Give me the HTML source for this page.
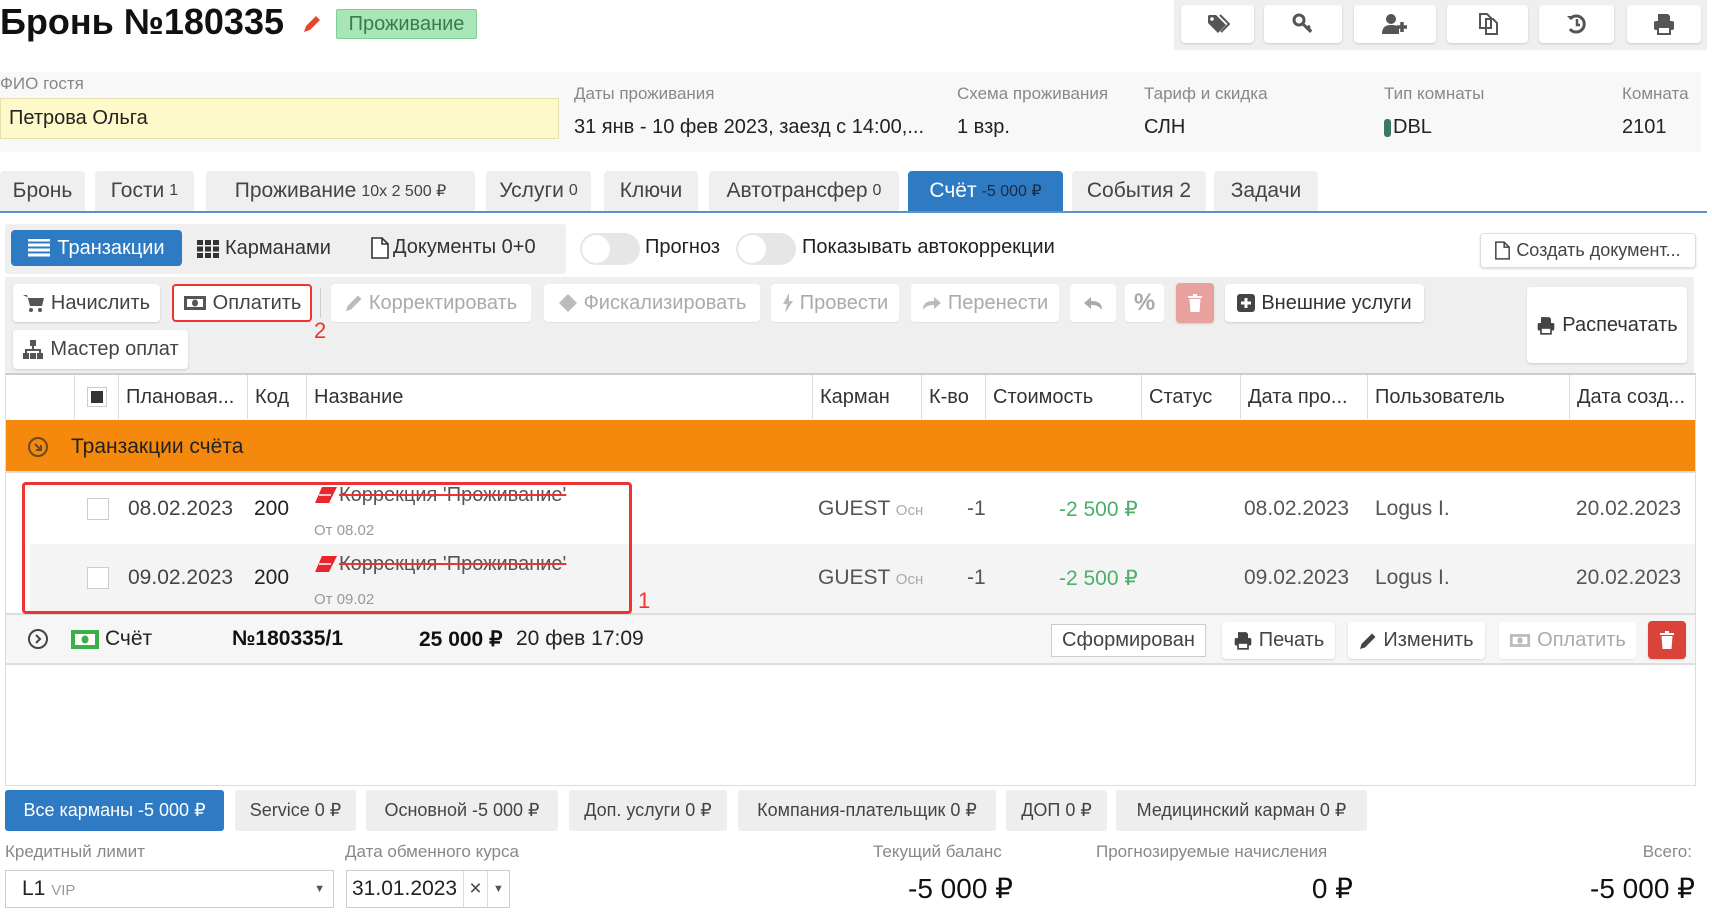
<!DOCTYPE html>
<html><head><meta charset="utf-8"><style>
*{box-sizing:border-box;margin:0;padding:0}
body{width:1712px;height:917px;overflow:hidden;background:#fff;font-family:"Liberation Sans",sans-serif;font-size:20px;color:#333;position:relative}
.a{position:absolute;white-space:nowrap}
.btn{position:absolute;background:#fff;border-radius:4px;box-shadow:0 1px 2px rgba(0,0,0,.15);display:flex;align-items:center;justify-content:center;gap:6px;white-space:nowrap;color:#444}
.dis{color:#aaa}
.tab{position:absolute;top:171px;height:40px;background:#efefef;border-radius:4px 4px 0 0;display:flex;align-items:center;justify-content:center;font-size:21px;color:#444;white-space:nowrap}
.tab small{font-size:16px;margin-left:5px}
.lbl{color:#888;font-size:17px}
.th{position:absolute;top:375px;height:44px;border-left:1px solid #ddd;display:flex;align-items:center;padding-left:7px;font-size:20px;color:#333;white-space:nowrap}
.pk{position:absolute;top:790px;height:41px;background:#eee;border-radius:3px;display:flex;align-items:center;justify-content:center;font-size:18px;color:#444;white-space:nowrap}
svg{display:block}
</style></head><body>
<div class="a" style="left:0;top:1px;font-size:36px;font-weight:bold;color:#111">Бронь №180335</div>
<svg class="a" style="left:300px;top:12px" width="24" height="24" viewBox="0 0 24 24"><path d="M4 20l2-6L16 4l4 4L10 18z" fill="#e8452f"/></svg>
<div class="a" style="left:336px;top:9px;width:141px;height:30px;background:#a8e6b8;border:1px solid #7fcf95;border-radius:2px;color:#3b7a4a;font-size:20px;text-align:center;line-height:28px">Проживание</div>
<div class="a" style="left:1174px;top:0;width:533px;height:50px;background:#efefef"></div>
<div class="btn" style="left:1181px;top:5px;width:73px;height:38px"><svg width="24" height="22" viewBox="0 0 24 22"><path d="M2 3v7l10 10 8-8L10 2H3z" fill="#555"/><circle cx="6" cy="6" r="1.8" fill="#fff"/><path d="M14 2l9 9-8 8" stroke="#555" stroke-width="2" fill="none"/></svg></div>
<div class="btn" style="left:1264px;top:5px;width:78px;height:38px"><svg width="22" height="22" viewBox="0 0 22 22"><circle cx="7" cy="7" r="5" stroke="#555" stroke-width="3" fill="none"/><path d="M10 10l9 9M15 15l3-2M17 18l2-2" stroke="#555" stroke-width="3"/></svg></div>
<div class="btn" style="left:1354px;top:5px;width:82px;height:38px"><svg width="28" height="22" viewBox="0 0 28 22"><circle cx="10" cy="6" r="5" fill="#555"/><path d="M1 21c0-7 4-9 9-9s7 1 8 3v6z" fill="#555"/><path d="M21 9v10M16 14h10" stroke="#555" stroke-width="3.5"/></svg></div>
<div class="btn" style="left:1447px;top:5px;width:81px;height:38px"><svg width="22" height="24" viewBox="0 0 22 24"><path d="M3 2h7l4 4v10H3z M9 7h7l4 4v11H9z" fill="#fff" stroke="#555" stroke-width="2"/></svg></div>
<div class="btn" style="left:1539px;top:5px;width:75px;height:38px"><svg width="22" height="22" viewBox="0 0 22 22"><path d="M4 6a8 8 0 1 1 0 10" stroke="#555" stroke-width="3" fill="none"/><path d="M1 3l4 4 4-4z" fill="#555"/><path d="M11 6v6h3" stroke="#555" stroke-width="2.5" fill="none"/></svg></div>
<div class="btn" style="left:1627px;top:5px;width:74px;height:38px"><svg width="24" height="22" viewBox="0 0 24 22"><path d="M6 1h10l2 2v5H6z" fill="#555"/><rect x="2" y="8" width="20" height="9" rx="2" fill="#555"/><rect x="6" y="14" width="12" height="7" fill="#fff" stroke="#555" stroke-width="2"/></svg></div>
<div class="a" style="left:0;top:72px;width:1701px;height:80px;background:#f8f8f8"></div>
<div class="a lbl" style="left:0;top:74px">ФИО гостя</div>
<div class="a" style="left:0;top:98px;width:559px;height:41px;background:#fdf9c8;border:1px solid #e5e0b0;padding-left:8px;line-height:39px;font-size:20px;color:#222">Петрова Ольга</div>
<div class="a lbl" style="left:574px;top:84px">Даты проживания</div>
<div class="a" style="left:574px;top:116px;font-size:20px;color:#222">31 янв - 10 фев 2023, заезд с 14:00,...</div>
<div class="a lbl" style="left:957px;top:84px">Схема проживания</div>
<div class="a" style="left:957px;top:116px;color:#222">1 взр.</div>
<div class="a lbl" style="left:1144px;top:84px">Тариф и скидка</div>
<div class="a" style="left:1144px;top:116px;color:#222">СЛН</div>
<div class="a lbl" style="left:1384px;top:84px">Тип комнаты</div>
<div class="a" style="left:1384px;top:119px;width:7px;height:18px;background:#3b7a5e;border-radius:3px"></div>
<div class="a" style="left:1393px;top:116px;color:#222">DBL</div>
<div class="a lbl" style="left:1622px;top:84px">Комната</div>
<div class="a" style="left:1622px;top:116px;color:#222">2101</div>
<div class="tab" style="left:0;width:85px">Бронь</div>
<div class="tab" style="left:95px;width:99px">Гости<small>1</small></div>
<div class="tab" style="left:206px;width:269px">Проживание<small>10x 2 500 ₽</small></div>
<div class="tab" style="left:486px;width:105px">Услуги<small>0</small></div>
<div class="tab" style="left:604px;width:94px">Ключи</div>
<div class="tab" style="left:709px;width:190px">Автотрансфер<small>0</small></div>
<div class="tab" style="left:908px;width:155px;background:#2e7bc4;color:#fff">Счёт<small style="color:#1a2a40">-5 000 ₽</small></div>
<div class="tab" style="left:1072px;width:134px">События 2</div>
<div class="tab" style="left:1214px;width:104px">Задачи</div>
<div class="a" style="left:0;top:211px;width:1707px;height:2px;background:#5b8fd0"></div>
<div class="a" style="left:5px;top:224px;width:561px;height:50px;background:#efefef;border-radius:3px"></div>
<div class="a" style="left:11px;top:230px;width:171px;height:36px;background:#2e7bc4;border-radius:4px;color:#fff;font-size:20px;display:flex;align-items:center;justify-content:center;gap:7px"><svg width="22" height="18" viewBox="0 0 22 18"><path d="M0 1h22M0 6h22M0 11h22M0 16h22" stroke="#fff" stroke-width="3"/></svg>Транзакции</div>
<div class="a" style="left:197px;top:237px;display:flex;gap:6px;align-items:center;color:#333"><svg width="22" height="18" viewBox="0 0 22 18"><g fill="#333"><rect x="0" y="0" width="6" height="5"/><rect x="8" y="0" width="6" height="5"/><rect x="16" y="0" width="6" height="5"/><rect x="0" y="6.5" width="6" height="5"/><rect x="8" y="6.5" width="6" height="5"/><rect x="16" y="6.5" width="6" height="5"/><rect x="0" y="13" width="6" height="5"/><rect x="8" y="13" width="6" height="5"/><rect x="16" y="13" width="6" height="5"/></g></svg>Карманами</div>
<div class="a" style="left:371px;top:236px;display:flex;gap:4px;align-items:center;color:#333"><svg width="18" height="22" viewBox="0 0 18 22"><path d="M1 1h10l6 6v14H1z" fill="#fff" stroke="#333" stroke-width="1.6"/><path d="M11 1v6h6" fill="none" stroke="#333" stroke-width="1.6"/></svg>Документы 0+0</div>
<div class="a" style="left:580px;top:233px;width:60px;height:32px;background:#e6e6e6;border-radius:16px"><div style="position:absolute;left:2px;top:2px;width:28px;height:28px;border-radius:50%;background:#fff"></div></div>
<div class="a" style="left:645px;top:236px;color:#222">Прогноз</div>
<div class="a" style="left:736px;top:233px;width:60px;height:32px;background:#e6e6e6;border-radius:16px"><div style="position:absolute;left:2px;top:2px;width:28px;height:28px;border-radius:50%;background:#fff"></div></div>
<div class="a" style="left:802px;top:236px;color:#222">Показывать автокоррекции</div>
<div class="btn" style="left:1480px;top:233px;width:216px;height:35px;border:1px solid #ddd;font-size:18px"><svg width="15" height="19" viewBox="0 0 18 22"><path d="M1 1h10l6 6v14H1z" fill="#fff" stroke="#444" stroke-width="1.8"/><path d="M11 1v6h6" fill="none" stroke="#444" stroke-width="1.8"/></svg>Создать документ...</div>
<div class="a" style="left:5px;top:277px;width:1689px;height:96px;background:#efefef"></div>
<div class="btn" style="left:13px;top:284px;width:147px;height:38px"><svg width="22" height="20" viewBox="0 0 22 20"><path d="M0 2h4l3 11h12l2-8H6z" fill="#555"/><circle cx="8" cy="17" r="2" fill="#555"/><circle cx="17" cy="17" r="2" fill="#555"/></svg>Начислить</div>
<div class="btn" style="left:172px;top:284px;width:140px;height:38px;border:2px solid #e33;box-shadow:none"><svg width="24" height="16" viewBox="0 0 24 16"><rect x="1" y="1" width="22" height="14" fill="#555"/><rect x="4" y="4" width="16" height="8" fill="#fff"/><ellipse cx="12" cy="8" rx="3" ry="3.5" fill="#555"/></svg>Оплатить</div>
<div class="a" style="left:320px;top:288px;width:1px;height:30px;background:#ccc"></div>
<div class="a" style="left:314px;top:318px;color:#e33;font-size:22px">2</div>
<div class="btn dis" style="left:331px;top:284px;width:200px;height:38px;box-shadow:0 1px 1px rgba(0,0,0,.06)"><svg width="18" height="18" viewBox="0 0 18 18"><path d="M1 17l1.5-5L13 1.5 16.5 5 6 15.5z" fill="#bbb"/></svg>Корректировать</div>
<div class="btn dis" style="left:544px;top:284px;width:216px;height:38px;box-shadow:0 1px 1px rgba(0,0,0,.06)"><svg width="20" height="20" viewBox="0 0 20 20"><path d="M10 1l9 9-9 9-9-9z" fill="#bbb"/></svg>Фискализировать</div>
<div class="btn dis" style="left:771px;top:284px;width:128px;height:38px;box-shadow:0 1px 1px rgba(0,0,0,.06)"><svg width="12" height="20" viewBox="0 0 12 20"><path d="M7 0L1 11h4l-2 9 8-12H7z" fill="#bbb"/></svg>Провести</div>
<div class="btn dis" style="left:911px;top:284px;width:148px;height:38px;box-shadow:0 1px 1px rgba(0,0,0,.06)"><svg width="20" height="16" viewBox="0 0 20 16"><path d="M1 15c0-7 4-9 11-9V2l7 6-7 6v-4c-5 0-8 1-11 5z" fill="#bbb"/></svg>Перенести</div>
<div class="btn dis" style="left:1070px;top:284px;width:46px;height:38px;box-shadow:0 1px 1px rgba(0,0,0,.06)"><svg width="20" height="16" viewBox="0 0 20 16"><path d="M19 15c0-7-4-9-11-9V2L1 8l7 6v-4c5 0 8 1 11 5z" fill="#aaa"/></svg></div>
<div class="btn dis" style="left:1125px;top:284px;width:39px;height:38px;font-size:24px;font-weight:bold;box-shadow:0 1px 1px rgba(0,0,0,.06)">%</div>
<div class="btn" style="left:1176px;top:283px;width:38px;height:40px;background:#e8a19d"><svg width="14" height="18" viewBox="0 0 14 18"><path d="M0 3h14M5 1h4" stroke="#fff" stroke-width="2"/><path d="M1.5 5h11l-1 13h-9z" fill="#fff"/></svg></div>
<div class="btn" style="left:1225px;top:284px;width:199px;height:38px;color:#333"><svg width="18" height="18" viewBox="0 0 18 18"><rect width="18" height="18" rx="3" fill="#444"/><path d="M9 4v10M4 9h10" stroke="#fff" stroke-width="3"/></svg>Внешние услуги</div>
<div class="btn" style="left:1527px;top:287px;width:160px;height:76px;color:#333"><svg width="20" height="19" viewBox="0 0 24 22"><path d="M6 1h10l2 2v5H6z" fill="#444"/><rect x="2" y="8" width="20" height="9" rx="2" fill="#444"/><rect x="6" y="14" width="12" height="7" fill="#fff" stroke="#444" stroke-width="2"/></svg>Распечатать</div>
<div class="btn" style="left:13px;top:330px;width:175px;height:39px"><svg width="22" height="20" viewBox="0 0 22 20"><rect x="8" y="0" width="6" height="6" fill="#555"/><path d="M11 6v4M4 13v-3h14v3" stroke="#555" stroke-width="2" fill="none"/><rect x="1" y="13" width="6" height="6" fill="#555"/><rect x="8" y="13" width="6" height="6" fill="#555"/><rect x="15" y="13" width="6" height="6" fill="#555"/></svg>Мастер оплат</div>
<div class="a" style="left:5px;top:373px;width:1691px;height:413px;border:1px solid #ddd;border-top:2px solid #ccc"></div>
<div class="th" style="left:74px;width:44px;justify-content:center;padding:0"><div style="width:20px;height:20px;border:1px solid #ccc;background:#fff;display:flex;align-items:center;justify-content:center"><div style="width:12px;height:12px;background:#333"></div></div></div>
<div class="th" style="left:118px;width:129px">Плановая...</div>
<div class="th" style="left:247px;width:59px">Код</div>
<div class="th" style="left:306px;width:506px">Название</div>
<div class="th" style="left:812px;width:109px">Карман</div>
<div class="th" style="left:921px;width:64px">К-во</div>
<div class="th" style="left:985px;width:156px">Стоимость</div>
<div class="th" style="left:1141px;width:99px">Статус</div>
<div class="th" style="left:1240px;width:127px">Дата про...</div>
<div class="th" style="left:1367px;width:202px">Пользователь</div>
<div class="th" style="left:1569px;width:127px">Дата созд...</div>
<div class="a" style="left:6px;top:420px;width:1689px;height:53px;background:#f5890e;border-bottom:2px solid #ddd"></div>
<svg class="a" style="left:27px;top:436px" width="22" height="22" viewBox="0 0 22 22"><circle cx="11" cy="11" r="9" stroke="#6b4a1e" stroke-width="2" fill="none"/><path d="M8 8l6 6M9 14h5V9" stroke="#6b4a1e" stroke-width="2" fill="none"/></svg>
<div class="a" style="left:71px;top:435px;font-size:21px;color:#222">Транзакции счёта</div>
<div class="a" style="left:30px;top:544px;width:1665px;height:70px;background:#f4f4f4"></div>
<div class="a" style="left:6px;top:613px;width:1689px;height:52px;background:#f6f6f6;border-top:2px solid #ddd;border-bottom:2px solid #ddd"></div>
<div class="a" style="left:87px;top:498px;width:22px;height:22px;border:1px solid #ccc;background:#fff"></div>
<div class="a" style="left:87px;top:567px;width:22px;height:22px;border:1px solid #ccc;background:#fff"></div>
<div class="a" style="left:128px;top:497px;font-size:21px;color:#444">08.02.2023</div>
<div class="a" style="left:128px;top:566px;font-size:21px;color:#444">09.02.2023</div>
<div class="a" style="left:254px;top:497px;font-size:21px;color:#222">200</div>
<div class="a" style="left:254px;top:566px;font-size:21px;color:#222">200</div>
<svg class="a" style="left:314px;top:486px" width="24" height="18" viewBox="0 0 24 18"><path d="M8 1h15l-8 16H1z" fill="#e8262b"/><path d="M5 9h12" stroke="#fff" stroke-width="1.5"/></svg>
<svg class="a" style="left:314px;top:555px" width="24" height="18" viewBox="0 0 24 18"><path d="M8 1h15l-8 16H1z" fill="#e8262b"/><path d="M5 9h12" stroke="#fff" stroke-width="1.5"/></svg>
<div class="a" style="left:339px;top:484px;font-size:20px;color:#555;text-decoration:line-through;text-decoration-color:#e33">Коррекция 'Проживание'</div>
<div class="a" style="left:339px;top:553px;font-size:20px;color:#555;text-decoration:line-through;text-decoration-color:#e33">Коррекция 'Проживание'</div>
<div class="a" style="left:314px;top:522px;font-size:15px;color:#999">От 08.02</div>
<div class="a" style="left:314px;top:591px;font-size:15px;color:#999">От 09.02</div>
<div class="a" style="left:818px;top:497px;font-size:21px;color:#555">GUEST <span style="font-size:15px;color:#aaa">Осн</span></div>
<div class="a" style="left:818px;top:566px;font-size:21px;color:#555">GUEST <span style="font-size:15px;color:#aaa">Осн</span></div>
<div class="a" style="left:967px;top:497px;font-size:21px;color:#555">-1</div>
<div class="a" style="left:967px;top:566px;font-size:21px;color:#555">-1</div>
<div class="a" style="left:1059px;top:497px;font-size:21px;color:#4caf6a">-2 500 ₽</div>
<div class="a" style="left:1059px;top:566px;font-size:21px;color:#4caf6a">-2 500 ₽</div>
<div class="a" style="left:1244px;top:497px;font-size:21px;color:#555">08.02.2023</div>
<div class="a" style="left:1244px;top:566px;font-size:21px;color:#555">09.02.2023</div>
<div class="a" style="left:1375px;top:497px;font-size:21px;color:#555">Logus I.</div>
<div class="a" style="left:1375px;top:566px;font-size:21px;color:#555">Logus I.</div>
<div class="a" style="right:31px;top:497px;font-size:21px;color:#555">20.02.2023</div>
<div class="a" style="right:31px;top:566px;font-size:21px;color:#555">20.02.2023</div>
<div class="a" style="left:22px;top:482px;width:610px;height:132px;border:3px solid #e33;border-radius:4px"></div>
<div class="a" style="left:638px;top:588px;color:#e33;font-size:22px">1</div>
<svg class="a" style="left:27px;top:628px" width="22" height="22" viewBox="0 0 22 22"><circle cx="11" cy="11" r="9" stroke="#444" stroke-width="2" fill="none"/><path d="M9 7l4 4-4 4" stroke="#444" stroke-width="2" fill="none"/></svg>
<svg class="a" style="left:71px;top:630px" width="28" height="19" viewBox="0 0 28 19"><rect x="0" y="0" width="28" height="19" fill="#3ab04a"/><rect x="4" y="4" width="20" height="11" fill="#fff"/><ellipse cx="14" cy="9.5" rx="3.5" ry="4" fill="#3ab04a"/></svg>
<div class="a" style="left:105px;top:627px;font-size:21px;color:#222">Счёт</div>
<div class="a" style="left:232px;top:627px;font-size:21px;font-weight:bold;color:#111">№180335/1</div>
<div class="a" style="left:419px;top:627px;font-size:21px;font-weight:bold;color:#111">25 000 ₽</div>
<div class="a" style="left:516px;top:627px;font-size:21px;color:#222">20 фев 17:09</div>
<div class="a" style="left:1051px;top:624px;width:155px;height:33px;border:1px solid #ccc;background:#fff;font-size:20px;color:#444;text-align:center;line-height:31px">Сформирован</div>
<div class="btn" style="left:1222px;top:622px;width:113px;height:37px"><svg width="20" height="19" viewBox="0 0 24 22"><path d="M6 1h10l2 2v5H6z" fill="#444"/><rect x="2" y="8" width="20" height="9" rx="2" fill="#444"/><rect x="6" y="14" width="12" height="7" fill="#fff" stroke="#444" stroke-width="2"/></svg>Печать</div>
<div class="btn" style="left:1348px;top:622px;width:137px;height:37px"><svg width="18" height="18" viewBox="0 0 18 18"><path d="M1 17l1.5-5L13 1.5 16.5 5 6 15.5z" fill="#444"/></svg>Изменить</div>
<div class="btn dis" style="left:1499px;top:622px;width:137px;height:37px;box-shadow:0 1px 1px rgba(0,0,0,.08)"><svg width="22" height="15" viewBox="0 0 24 16"><rect x="1" y="1" width="22" height="14" fill="#bbb"/><rect x="4" y="4" width="16" height="8" fill="#fff"/><ellipse cx="12" cy="8" rx="3" ry="3.5" fill="#bbb"/></svg>Оплатить</div>
<div class="btn" style="left:1648px;top:621px;width:38px;height:38px;background:#d9433a"><svg width="14" height="18" viewBox="0 0 14 18"><path d="M0 3h14M5 1h4" stroke="#fff" stroke-width="2"/><path d="M1.5 5h11l-1 13h-9z" fill="#fff"/></svg></div>
<div class="pk" style="left:5px;width:219px;background:#2e7bc4;color:#fff">Все карманы -5 000 ₽</div>
<div class="pk" style="left:235px;width:121px">Service 0 ₽</div>
<div class="pk" style="left:366px;width:192px">Основной -5 000 ₽</div>
<div class="pk" style="left:569px;width:158px">Доп. услуги 0 ₽</div>
<div class="pk" style="left:738px;width:258px">Компания-плательщик 0 ₽</div>
<div class="pk" style="left:1006px;width:101px">ДОП 0 ₽</div>
<div class="pk" style="left:1116px;width:251px">Медицинский карман 0 ₽</div>
<div class="a lbl" style="left:5px;top:842px">Кредитный лимит</div>
<div class="a lbl" style="left:345px;top:842px">Дата обменного курса</div>
<div class="a lbl" style="left:873px;top:842px">Текущий баланс</div>
<div class="a lbl" style="left:1096px;top:842px">Прогнозируемые начисления</div>
<div class="a lbl" style="right:20px;top:842px">Всего:</div>
<div class="a" style="left:5px;top:870px;width:329px;height:38px;border:1px solid #ccc;padding-left:16px;line-height:36px;font-size:21px;color:#222">L1 <span style="font-size:15px;color:#999">VIP</span><span style="position:absolute;right:8px;font-size:11px;color:#555">▼</span></div>
<div class="a" style="left:346px;top:870px;width:164px;height:38px;border:1px solid #ccc;line-height:36px;font-size:21px;color:#222;padding-left:5px">31.01.2023<span style="position:absolute;left:116px;top:0;width:24px;height:36px;border-left:1px solid #ddd;text-align:center;color:#444">×</span><span style="position:absolute;left:140px;top:0;width:22px;height:36px;border-left:1px solid #ddd;text-align:center;font-size:11px;color:#555">▼</span></div>
<div class="a" style="right:699px;top:872px;font-size:28px;color:#111">-5 000 ₽</div>
<div class="a" style="right:359px;top:872px;font-size:28px;color:#111">0 ₽</div>
<div class="a" style="right:17px;top:872px;font-size:28px;color:#111">-5 000 ₽</div>
</body></html>
